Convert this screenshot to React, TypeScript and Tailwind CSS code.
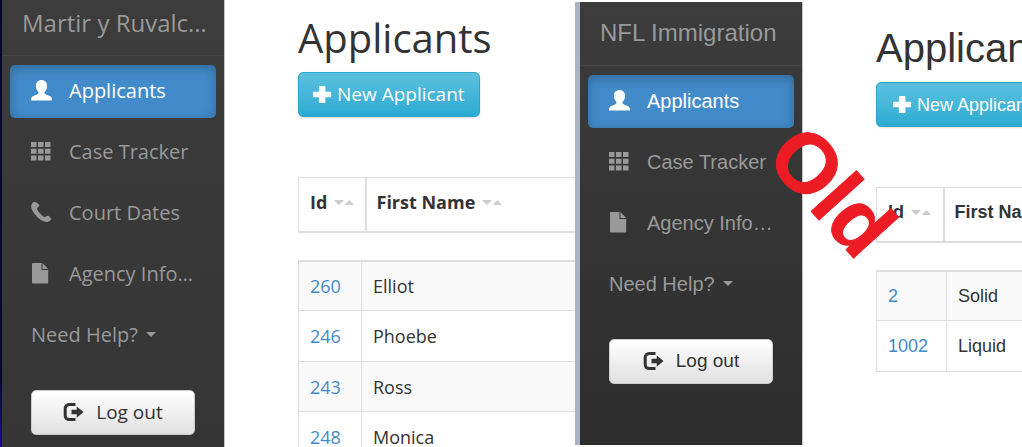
import type { ReactNode } from "react";
import clsx from "clsx";

type IconName = "user" | "grid" | "phone" | "file" | "logout" | "plus";

function Icon({ name }: { name: IconName }) {
  const shapes: Record<IconName, ReactNode> = {
    user: (
      <path d="M10.500 0C7.300 0 4.900 2.200 4.900 5.800c0 2.500.8 4.400 2.100 5.700.6.6.7 1.700.1 2.200-.5.500-1.400.9-2.300 1.200-1.700.600-3.300 1.300-4.100 2.300C.2 17.900 0 18.900 0 20.500h21c0-1.600-.2-2.600-.7-3.300-.8-1-2.400-1.700-4.100-2.300-.9-.3-1.800-.7-2.300-1.200-.6-.5-.5-1.600.1-2.200 1.300-1.300 2.100-3.200 2.100-5.700C16.100 2.200 13.700 0 10.500 0z" />
    ),
    grid: (
      <path d="M0 1h5.500v5H0zM7 1h5.500v5H7zM14 1h5.500v5H14zM0 7.700h5.500v5H0zM7 7.700h5.500v5H7zM14 7.700h5.500v5H14zM0 14.400h5.500v5H0zM7 14.400h5.500v5H7zM14 14.400h5.500v5H14z" />
    ),
    phone: (
      <path d="M3.300.1c-.5-.2-1 0-1.300.3L.8 2C-.2 3.600.2 6.500 1.800 9.300c2.600 4.700 6.800 8.600 11.300 10.200 1.800.7 3.500.6 4.900-.2l1.700-1.200c.5-.4.600-1 .3-1.500l-2.200-2.500c-.4-.5-1-.6-1.600-.3l-2.200 1.100c-.5.2-1 .1-1.400-.2-2.800-2.100-4.900-4.500-6.400-7.500-.2-.4-.1-.9.2-1.200l1.500-1.800c.3-.4.4-.9.1-1.400L5.500.6C5.300.3 4.500.2 3.300.100z" />
    ),
    file: (
      <path d="M1.800 0H10.500v7h6.700v12.700c0 .5-.3.800-.8.800H1.800c-.5 0-.8-.3-.8-.8V.8c0-.5.300-.8.800-.8zM11.500 0l5.700 6H11.500z" />
    ),
    logout: (
      <>
        <path d="M12.500 2.500H6.200a4 4 0 0 0-4 4v7a4 4 0 0 0 4 4h6.300" fill="none" stroke="currentColor" strokeWidth="3" />
        <path d="M8.500 7.700h5.200V4.400L20.500 10l-6.800 5.800v-3.500H8.500z" />
      </>
    ),
    plus: (
      <path d="M7 1h5.200a.8.800 0 0 1 .8.800v5.400h5.300c.4 0 .7.300.7.700v4.200c0 .4-.3.700-.7.700H13v5.500c0 .4-.3.700-.8.700H7c-.5 0-.8-.3-.8-.7v-5.500H.7c-.4 0-.7-.3-.7-.7V7.900c0-.4.300-.7.700-.7h5.500V1.800c0-.5.3-.8.8-.8z" />
    ),
  };
  return (
    <svg
      viewBox="0 0 21 21"
      aria-hidden="true"
      fill="currentColor"
      className={clsx("shrink-0", name === "plus" ? "size-5" : "size-[21px]")}
    >
      {shapes[name]}
    </svg>
  );
}

function Caret() {
  return (
    <svg viewBox="0 0 10 5" aria-hidden="true" fill="currentColor" className="h-[5px] w-[10px]">
      <path d="M0 0h10L5 5z" />
    </svg>
  );
}

function SortMarks() {
  return (
    <svg viewBox="0 0 20 5" aria-hidden="true" className="h-[5px] w-5 fill-[#cccccc]">
      <path d="M0 0h10L5 5zM10.500 5h9.500L15.500 0z" />
    </svg>
  );
}

type NavEntry = { icon: IconName; label: string };

function Sidebar({ brand, items, className }: { brand: string; items: NavEntry[]; className: string }) {
  return (
    <aside className={clsx("w-[223px] shrink-0 border-r border-[#c4c4c4] bg-linear-to-b text-xl text-[#999999]", className)}>
      <div className="border-b border-[#454545] pt-[3px] pr-2 pb-3 pl-5">
        <a href="#home" className="block truncate text-2xl leading-10">{brand}</a>
      </div>
      <nav className="flex flex-col gap-2 px-2 pt-[9px]">
        {items.map((item, i) => (
          <a
            key={item.label}
            href="#section"
            className={clsx(
              "flex h-[53px] items-center gap-[17px] rounded-[5px] px-[21px] pb-0.5",
              i === 0 && "bg-[#428bca] text-white shadow-[inset_0_3px_12px_rgba(0,0,0,0.25)]",
            )}
          >
            <Icon name={item.icon} />
            <span className="whitespace-nowrap">{item.label}</span>
          </a>
        ))}
        <button type="button" className="flex h-[53px] items-center gap-2 px-[21px] pb-0.5">
          Need Help? <Caret />
        </button>
      </nav>
      <button
        type="button"
        className="mx-[29px] mt-7 flex h-[45px] w-[164px] items-center justify-center gap-3 rounded-[5px] border border-[#cccccc] bg-linear-to-b from-white to-[#e0e0e0] text-[19px] text-[#333333]"
      >
        <Icon name="logout" />
        Log out
      </button>
    </aside>
  );
}

type Row = { id: string; name: string };

function Applicants({ rows, className, headWeight, buttonText, idWidth }: {
  rows: Row[];
  className: string;
  headWeight: string;
  buttonText: string;
  idWidth: string;
}) {
  return (
    <main className={clsx("min-w-0 flex-1 overflow-hidden pl-[73px] text-[#333333]", className)}>
      <div className="w-[700px]">
        <h1 className="text-[40px] leading-[48px]">Applicants</h1>
        <button
          type="button"
          className={clsx(
            "mt-[10px] flex h-[45px] items-center rounded-[5px] border border-[#2da5c9] bg-linear-to-b from-[#5bc0de] to-[#2aabd2] whitespace-nowrap text-white shadow-sm",
            buttonText,
          )}
        >
          <Icon name="plus" />
          New Applicant
        </button>
        <table className="mt-[60px] w-full table-fixed border-collapse border border-[#dddddd] text-lg">
          <thead>
            <tr className={clsx("h-[54px] border-b-2 border-[#dddddd] text-left", headWeight)}>
              <th scope="col" className="w-[67px] border-r-2 border-[#dddddd] pb-1 pl-[11px] font-[inherit]">
                <span className="flex items-center gap-[7px]">Id <SortMarks /></span>
              </th>
              <th scope="col" className="pb-1 pl-[10px] font-[inherit]">
                <span className="flex items-center gap-[7px]">First Name <SortMarks /></span>
              </th>
            </tr>
          </thead>
        </table>
        <table aria-label="Applicants" className="mt-[27px] w-full table-fixed border-collapse border border-t-2 border-[#dddddd] text-lg">
          <tbody>
            {rows.map((row) => (
              <tr key={row.id} className="h-[51px] border-b border-[#dddddd] odd:h-[50px] odd:bg-[#f9f9f9]">
                <td className={clsx("border-r border-[#dddddd] pl-[11px]", idWidth)}>
                  <a href="#applicant" className="text-[#428bca]">{row.id}</a>
                </td>
                <td className="pl-[11px]">{row.name}</td>
              </tr>
            ))}
          </tbody>
        </table>
      </div>
    </main>
  );
}

const newItems: NavEntry[] = [
  { icon: "user", label: "Applicants" },
  { icon: "grid", label: "Case Tracker" },
  { icon: "phone", label: "Court Dates" },
  { icon: "file", label: "Agency Info…" },
];

const oldItems = newItems.filter((item) => item.icon !== "phone");

const newRows: Row[] = [
  { id: "260", name: "Elliot" },
  { id: "246", name: "Phoebe" },
  { id: "243", name: "Ross" },
  { id: "248", name: "Monica" },
];

const oldRows: Row[] = [
  { id: "2", name: "Solid" },
  { id: "1002", name: "Liquid" },
];

export default function App() {
  return (
    <div className="relative grid h-screen grid-cols-[575fr_447fr] overflow-hidden bg-white">
      <section className="flex min-w-0 overflow-hidden font-['Open_Sans',sans-serif]">
        <div className="w-0.5 shrink-0 bg-linear-to-b from-[#08082c] from-85% to-[#1b00a0]" />
        <Sidebar brand="Martir y Ruvalc…" items={newItems} className="from-[#3c3c3c] to-[#353535]" />
        <Applicants
          rows={newRows}
          className="pt-3.5"
          headWeight="font-medium"
          buttonText="gap-1 px-[14px] text-[19px]"
          idWidth="w-[63px]"
        />
      </section>
      <section className="mt-0.5 mb-0.5 flex min-w-0 overflow-hidden border-l-5 border-[#a9b5c5] font-['Liberation_Sans',sans-serif]">
        <Sidebar brand="NFL Immigration" items={oldItems} className="from-[#3c3c3c] to-[#2d2d2d] pt-2" />
        <Applicants
          rows={oldRows}
          className="pt-[22px]"
          headWeight="font-bold"
          buttonText="gap-1 px-4 text-lg"
          idWidth="w-[70px]"
        />
      </section>
      <div className="pointer-events-none absolute top-[149px] left-[762px] rotate-48 font-['Liberation_Sans',sans-serif] text-[84px] leading-[84px] font-bold text-[#ed1c24] [-webkit-text-stroke:1px_#ed1c24]">
        Old
      </div>
    </div>
  );
}
